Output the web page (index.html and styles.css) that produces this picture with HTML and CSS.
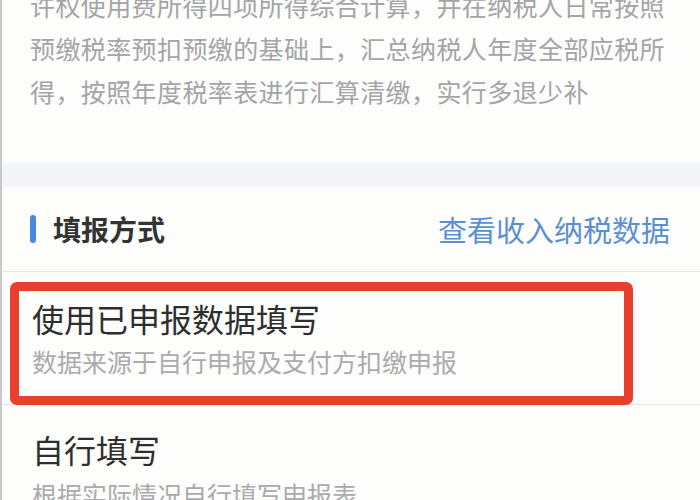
FILE: index.html
```html
<!DOCTYPE html>
<html lang="zh-CN">
<head>
<meta charset="utf-8">
<title>填报方式</title>
<link rel="stylesheet" href="styles.css">
</head>
<body>
<div class="page">
  <section class="intro">
    <p class="intro-text">许权使用费所得四项所得综合计算，并在纳税人日常按照<br>预缴税率预扣预缴的基础上，汇总纳税人年度全部应税所<br>得，按照年度税率表进行汇算清缴，实行多退少补</p>
  </section>
  <div class="band"></div>
  <section class="methods">
    <header class="methods-head">
      <div class="head-title"><span class="head-bar"></span>填报方式</div>
      <a class="head-link">查看收入纳税数据</a>
    </header>
    <div class="option option-first">
      <div class="option-title">使用已申报数据填写</div>
      <div class="option-desc">数据来源于自行申报及支付方扣缴申报</div>
      <span class="highlight"></span>
    </div>
    <div class="option">
      <div class="option-title">自行填写</div>
      <div class="option-desc">根据实际情况自行填写申报表</div>
    </div>
  </section>
</div>
</body>
</html>
```
FILE: styles.css
```css
* { box-sizing: border-box; }
html, body {
  margin: 0;
  padding: 0;
  background: #fdfdfb;
  font-family: "Noto Sans CJK SC", "Noto Sans", sans-serif;
  overflow: hidden;
}
.page {
  height: 500px;
  border-left: 2px solid #c9c9c9;
  background: #fdfdfb;
}
.intro {
  padding: 0 20px 0 28px;
  height: 163px;
  overflow: hidden;
}
.intro-text {
  margin: -16px 0 0 0;
  font-size: 25px;
  letter-spacing: 0.4px;
  line-height: 43px;
  color: #a3a5a6;
  white-space: nowrap;
}
.band {
  height: 24px;
  background: #f3f5f9;
}
.methods-head {
  height: 85px;
  display: flex;
  align-items: center;
  justify-content: space-between;
  padding: 0 30px 0 28px;
  border-bottom: 1px solid #e7e7e7;
}
.head-title {
  display: flex;
  align-items: center;
  font-size: 28px;
  font-weight: bold;
  color: #333;
}
.head-bar {
  width: 6px;
  height: 28px;
  border-radius: 3px;
  background: #4a87e4;
  margin-right: 17px;
}
.head-link {
  font-size: 29px;
  color: #5a8fd3;
}
.option {
  position: relative;
  padding: 24px 0 0 30px;
  border-bottom: 1px solid #e7e7e7;
  height: 133px;
}
.option-first {
  padding-top: 26px;
  height: 133px;
}
.option-title {
  font-size: 32px;
  line-height: 40px;
  color: #2e2e2e;
}
.option-desc {
  margin-top: 6px;
  font-size: 25px;
  line-height: 34px;
  color: #a9abac;
}
.option + .option .option-desc {
  margin-top: 8px;
}
.highlight {
  position: absolute;
  left: 8px;
  top: 10px;
  width: 623px;
  height: 123px;
  border: 9px solid #e7402f;
  border-radius: 7px;
}
```
